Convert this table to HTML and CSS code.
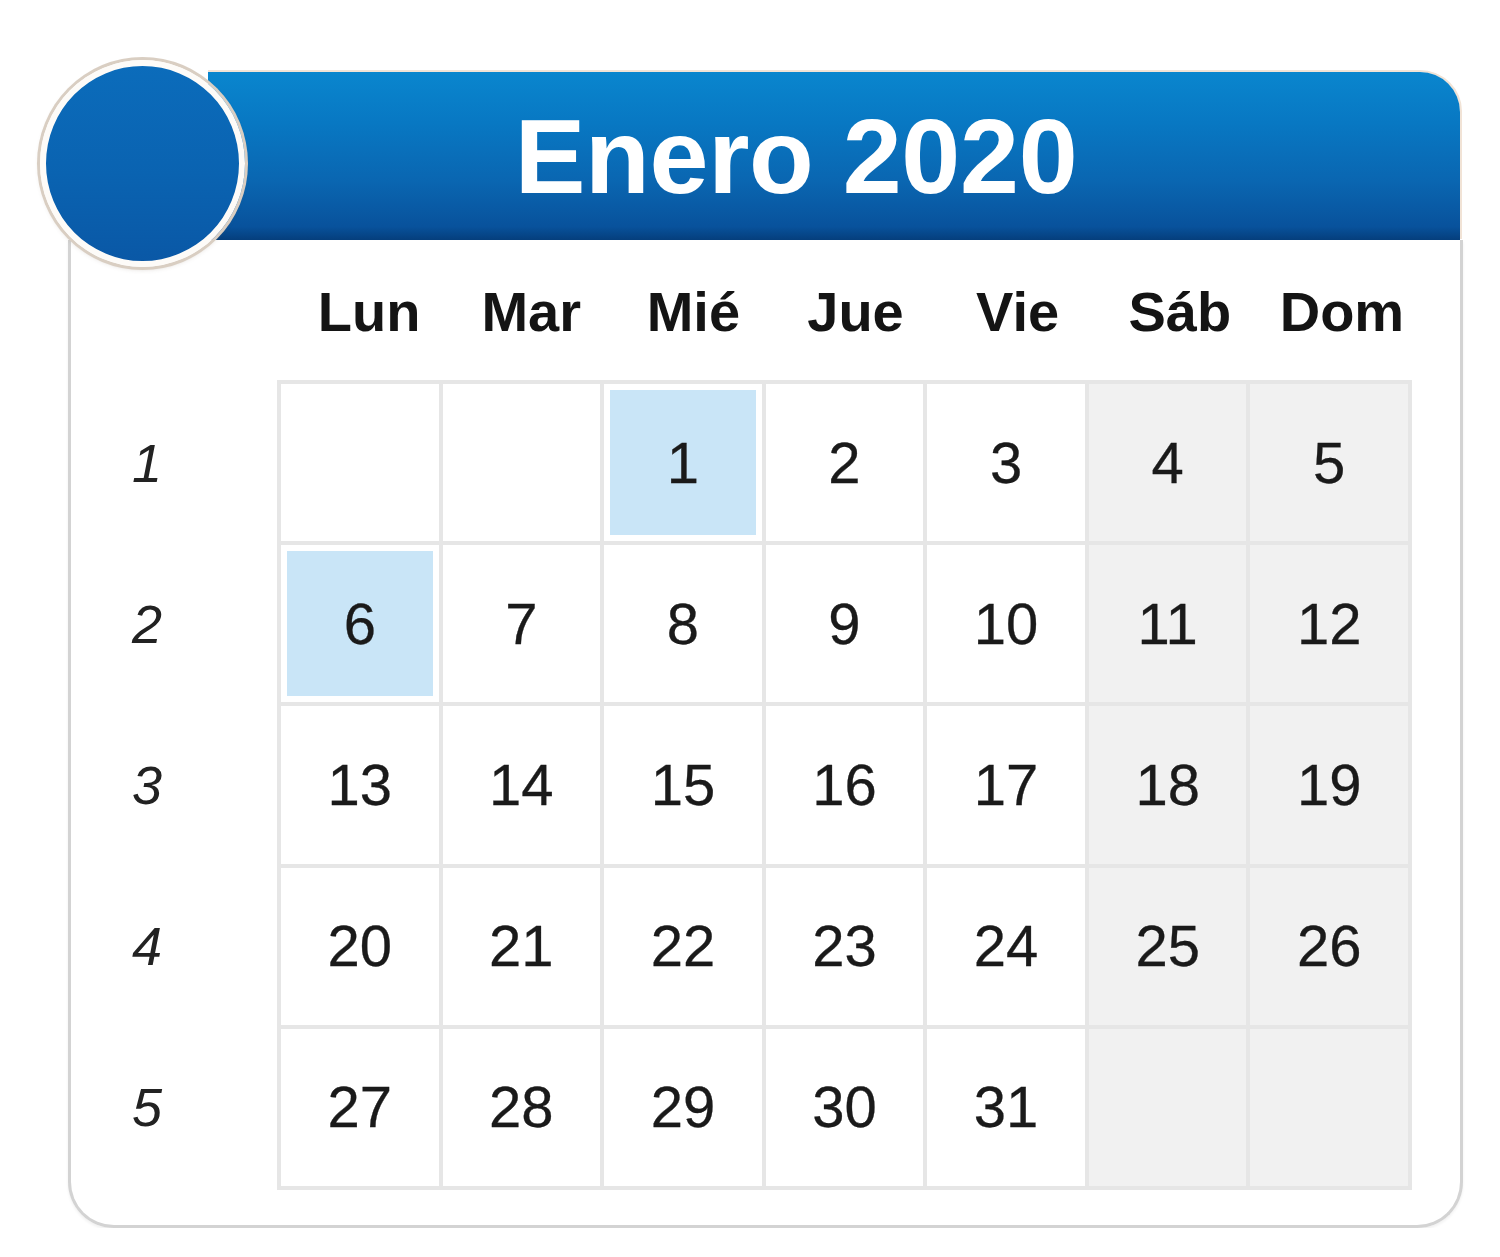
FILE: index.html
```html
<!DOCTYPE html>
<html lang="es">
<head>
<meta charset="utf-8">
<title>Enero 2020</title>
<link rel="stylesheet" href="styles.css">
</head>
<body>
<div class="calendar">
  <div class="badge"></div>
  <div class="header"><h1 class="title">Enero 2020</h1></div>
  <div class="body">
    <div class="days">
      <div class="day">Lun</div>
      <div class="day">Mar</div>
      <div class="day">Mié</div>
      <div class="day">Jue</div>
      <div class="day">Vie</div>
      <div class="day">Sáb</div>
      <div class="day">Dom</div>
    </div>
    <div class="main">
      <div class="weeks">
        <div class="week">1</div>
        <div class="week">2</div>
        <div class="week">3</div>
        <div class="week">4</div>
        <div class="week">5</div>
      </div>
      <div class="grid">
        <div class="cell"></div>
        <div class="cell"></div>
        <div class="cell hl">1</div>
        <div class="cell">2</div>
        <div class="cell">3</div>
        <div class="cell we">4</div>
        <div class="cell we">5</div>

        <div class="cell hl">6</div>
        <div class="cell">7</div>
        <div class="cell">8</div>
        <div class="cell">9</div>
        <div class="cell">10</div>
        <div class="cell we">11</div>
        <div class="cell we">12</div>

        <div class="cell">13</div>
        <div class="cell">14</div>
        <div class="cell">15</div>
        <div class="cell">16</div>
        <div class="cell">17</div>
        <div class="cell we">18</div>
        <div class="cell we">19</div>

        <div class="cell">20</div>
        <div class="cell">21</div>
        <div class="cell">22</div>
        <div class="cell">23</div>
        <div class="cell">24</div>
        <div class="cell we">25</div>
        <div class="cell we">26</div>

        <div class="cell">27</div>
        <div class="cell">28</div>
        <div class="cell">29</div>
        <div class="cell">30</div>
        <div class="cell">31</div>
        <div class="cell we"></div>
        <div class="cell we"></div>
      </div>
    </div>
  </div>
</div>
</body>
</html>
```
FILE: styles.css
```css
html, body {
  margin: 0;
  padding: 0;
  background: #ffffff;
}

body {
  font-family: "Liberation Sans", Arial, sans-serif;
  color: #1c1c1c;
}

.calendar {
  position: relative;
  width: 1395px;
  margin: 72px 0 0 68px;
}

.badge {
  position: absolute;
  left: -28px;
  top: -12px;
  width: 193px;
  height: 195px;
  border-radius: 50%;
  background: linear-gradient(180deg, #0b6cbb 0%, #0a63b1 55%, #0a58a6 100%);
  border: 6px solid #fdfbf8;
  box-shadow: 0 0 0 3px #d9cec2, 0 2px 5px rgba(120, 100, 80, 0.3);
  z-index: 2;
}

.header {
  margin-left: 140px;
  margin-right: 3px;
  height: 168px;
  border-radius: 0 40px 0 0;
  background: linear-gradient(180deg, #0a86ce 0%, #0878c3 30%, #0a66b1 65%, #08529c 92%, #053e7c 100%);
  box-shadow: 0 -2px 0 0 #f1e3d6, 2px -1px 0 0 #f1e3d6;
  display: flex;
  align-items: center;
  justify-content: center;
  padding-right: 76px;
  box-sizing: border-box;
}

.title {
  margin: 0;
  font-size: 106px;
  font-weight: bold;
  color: #ffffff;
  line-height: 1;
  letter-spacing: -0.3px;
}

.body {
  height: 988px;
  box-sizing: border-box;
  border: 3px solid #d3d3d3;
  border-top: none;
  border-radius: 0 0 46px 46px;
  box-shadow: 0 2px 3px rgba(0, 0, 0, 0.06);
}

.days {
  display: grid;
  grid-template-columns: repeat(7, 1fr);
  margin-left: 206px;
  width: 1135px;
  padding-top: 44px;
  margin-bottom: 40px;
}

.day {
  font-size: 56px;
  font-weight: bold;
  line-height: 56px;
  height: 56px;
  text-align: center;
  padding-left: 22px;
  color: #141414;
}

.main {
  display: flex;
}

.weeks {
  width: 152px;
  margin-right: 54px;
  display: flex;
  flex-direction: column;
  padding-top: 4px;
}

.week {
  height: 157.2px;
  margin-bottom: 4px;
  display: flex;
  align-items: center;
  justify-content: center;
  font-style: italic;
  font-size: 54px;
  line-height: 1;
  color: #222222;
}

.grid {
  width: 1135px;
  height: 810px;
  box-sizing: border-box;
  display: grid;
  grid-template-columns: repeat(7, 1fr);
  grid-template-rows: repeat(5, 1fr);
  gap: 4px;
  padding: 4px;
  background: #e6e6e6;
}

.cell {
  background: #ffffff;
  display: flex;
  align-items: center;
  justify-content: center;
  font-size: 58px;
  line-height: 1;
  color: #1a1a1a;
  -webkit-text-stroke: 0.3px #1a1a1a;
}

.cell.we {
  background: #f1f1f1;
}

.cell.hl {
  background: #c9e5f7;
  box-shadow: inset 0 0 0 6px #ffffff;
}
```
